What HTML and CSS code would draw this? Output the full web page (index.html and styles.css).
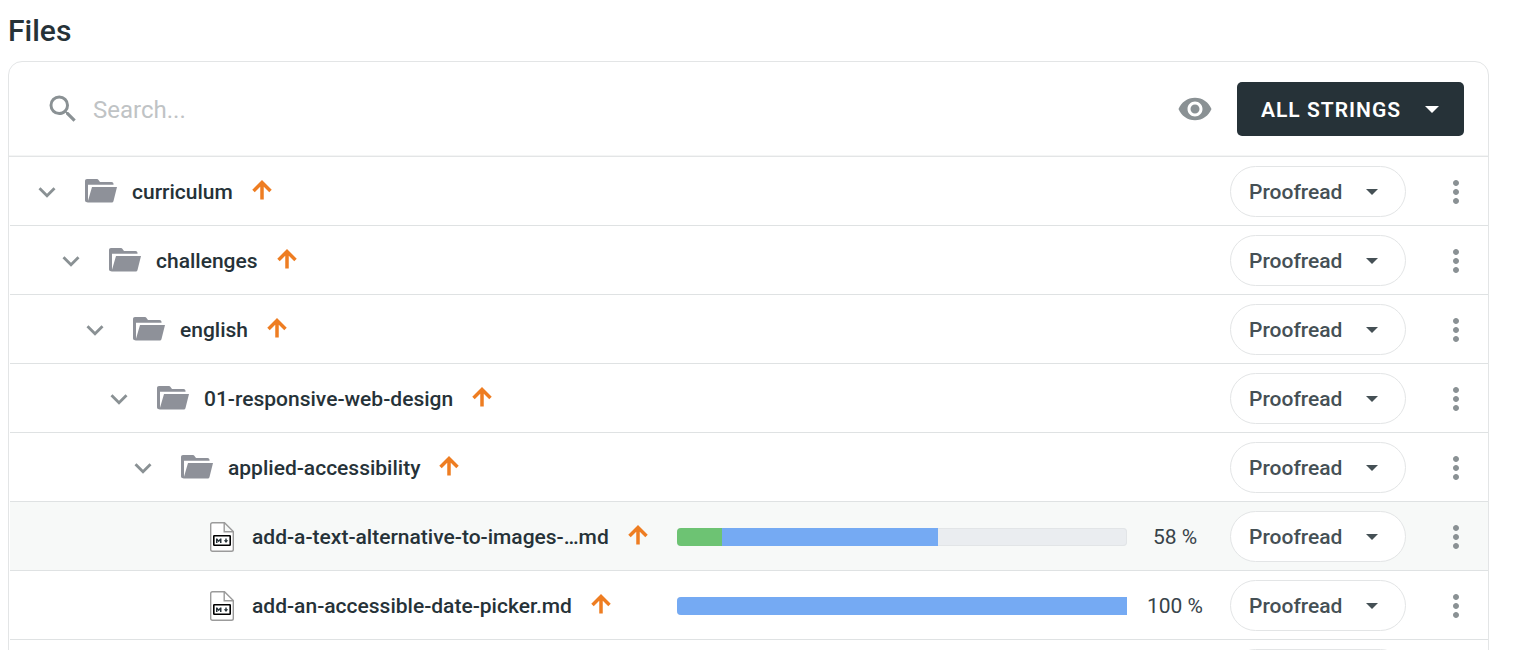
FILE: index.html
```html
<!DOCTYPE html>
<html lang="en">
<head>
  <meta charset="UTF-8" />
  <meta name="viewport" content="width=device-width, initial-scale=1.0" />
  <title>Files</title>
  <link rel="stylesheet" href="styles.css">
</head>
<body>
  <!-- Icons -->
  <svg class="sprite" aria-hidden="true">
    <symbol id="search" viewBox="0 0 24 24">
      <path d="M15.5 14h-.79l-.28-.27A6.47 6.47 0 0 0 16 9.5 6.5 6.5 0 1 0 9.5 16c1.61 0 3.09-.59 4.23-1.57l.27.28v.79l5 4.99L20.49 19l-4.99-5zm-6 0C7.01 14 5 11.99 5 9.5S7.01 5 9.5 5 14 7.01 14 9.5 11.99 14 9.5 14z"/>
    </symbol>
    <symbol id="eye" viewBox="0 0 24 24">
      <path d="M12 4.5C7 4.5 2.73 7.61 1 12c1.73 4.39 6 7.5 11 7.5s9.27-3.11 11-7.5c-1.73-4.39-6-7.5-11-7.5zM12 17c-2.76 0-5-2.24-5-5s2.24-5 5-5 5 2.24 5 5-2.24 5-5 5zm0-8c-1.66 0-3 1.34-3 3s1.34 3 3 3 3-1.34 3-3-1.34-3-3-3z"/>
    </symbol>
    <symbol id="chevron" viewBox="0 0 24 24">
      <path d="M16.59 8.59L12 13.17 7.41 8.59 6 10l6 6 6-6z"/>
    </symbol>
    <symbol id="dots" viewBox="0 0 24 24">
      <path d="M12 8c1.1 0 2-.9 2-2s-.9-2-2-2-2 .9-2 2 .9 2 2 2zm0 2c-1.1 0-2 .9-2 2s.9 2 2 2 2-.9 2-2-.9-2-2-2zm0 6c-1.1 0-2 .9-2 2s.9 2 2 2 2-.9 2-2-.9-2-2-2z"/>
    </symbol>
    <symbol id="caret" viewBox="0 0 12 6">
      <path d="M0 0h12L6 6z"/>
    </symbol>
    <symbol id="folder" viewBox="0 0 32 24">
      <path d="M2 0h9.500c1 0 1.500.4 2 1l1.500 2h11.500c1.200 0 2 .8 2 2v.8H3V23.200H2c-1.200 0-2-.8-2-2V2c0-1.200.8-2 2-2z"/>
      <path d="M7 8H32l-3.500 14c-.3 1.200-1 1.600-2 1.600H2.500z"/>
    </symbol>
    <symbol id="arrow-up" viewBox="0 0 20 20">
      <path d="M1.500 11L10 2.500 18.500 11M10 3v16.500" fill="none" stroke="currentColor" stroke-width="3.500"/>
    </symbol>
    <symbol id="md-file" viewBox="0 0 24 30">
      <path d="M2.500.7H14.500L23.300 9.500V27.500q0 1.800-1.800 1.800H2.500Q.7 29.300.7 27.500V2.500Q.7.7 2.500.7zM14.200.7V9.700H23.300" fill="#fff" stroke="#9b9b9b" stroke-width="1.400"/>
      <rect x="3.800" y="13.800" width="16.400" height="9.400" rx=".5" fill="#fff" stroke="#000" stroke-width="1.600"/>
      <path d="M6 21v-4.500h1.300L8.700 18.200l1.400-1.700h1.400V21H10v-2.300L8.700 20.200 7.500 18.700V21z"/>
      <path d="M15.300 16.500h1.400v1.800h1.500L16 21l-2.200-2.700h1.500z"/>
    </symbol>
  </svg>

  <main class="page">
    <h1>Files</h1>

    <div class="card">
      <!-- Toolbar -->
      <div class="toolbar">
        <label class="search">
          <svg class="icon"><use href="#search"/></svg>
          <input type="search" placeholder="Search..." aria-label="Search">
        </label>
        <button class="icon-btn" type="button" aria-label="Preview"><svg class="icon"><use href="#eye"/></svg></button>
        <div class="dropdown filter">
          <select aria-label="Filter"><option>All strings</option></select>
          <svg class="caret"><use href="#caret"/></svg>
        </div>
      </div>

      <!-- File tree -->
      <ul class="files">
        <li class="row level-1">
          <div class="name">
            <button class="icon-btn toggle" type="button" aria-label="Collapse"><svg class="icon"><use href="#chevron"/></svg></button>
            <svg class="folder"><use href="#folder"/></svg>
            <a href="#">curriculum</a>
            <svg class="priority"><use href="#arrow-up"/></svg>
          </div>
          <div class="dropdown status">
            <select aria-label="Status"><option>Proofread</option></select>
            <svg class="caret"><use href="#caret"/></svg>
          </div>
          <button class="icon-btn menu" type="button" aria-label="More"><svg class="icon"><use href="#dots"/></svg></button>
        </li>
        <li class="row level-2">
          <div class="name">
            <button class="icon-btn toggle" type="button" aria-label="Collapse"><svg class="icon"><use href="#chevron"/></svg></button>
            <svg class="folder"><use href="#folder"/></svg>
            <a href="#">challenges</a>
            <svg class="priority"><use href="#arrow-up"/></svg>
          </div>
          <div class="dropdown status">
            <select aria-label="Status"><option>Proofread</option></select>
            <svg class="caret"><use href="#caret"/></svg>
          </div>
          <button class="icon-btn menu" type="button" aria-label="More"><svg class="icon"><use href="#dots"/></svg></button>
        </li>
        <li class="row level-3">
          <div class="name">
            <button class="icon-btn toggle" type="button" aria-label="Collapse"><svg class="icon"><use href="#chevron"/></svg></button>
            <svg class="folder"><use href="#folder"/></svg>
            <a href="#">english</a>
            <svg class="priority"><use href="#arrow-up"/></svg>
          </div>
          <div class="dropdown status">
            <select aria-label="Status"><option>Proofread</option></select>
            <svg class="caret"><use href="#caret"/></svg>
          </div>
          <button class="icon-btn menu" type="button" aria-label="More"><svg class="icon"><use href="#dots"/></svg></button>
        </li>
        <li class="row level-4">
          <div class="name">
            <button class="icon-btn toggle" type="button" aria-label="Collapse"><svg class="icon"><use href="#chevron"/></svg></button>
            <svg class="folder"><use href="#folder"/></svg>
            <a href="#">01-responsive-web-design</a>
            <svg class="priority"><use href="#arrow-up"/></svg>
          </div>
          <div class="dropdown status">
            <select aria-label="Status"><option>Proofread</option></select>
            <svg class="caret"><use href="#caret"/></svg>
          </div>
          <button class="icon-btn menu" type="button" aria-label="More"><svg class="icon"><use href="#dots"/></svg></button>
        </li>
        <li class="row level-5">
          <div class="name">
            <button class="icon-btn toggle" type="button" aria-label="Collapse"><svg class="icon"><use href="#chevron"/></svg></button>
            <svg class="folder"><use href="#folder"/></svg>
            <a href="#">applied-accessibility</a>
            <svg class="priority"><use href="#arrow-up"/></svg>
          </div>
          <div class="dropdown status">
            <select aria-label="Status"><option>Proofread</option></select>
            <svg class="caret"><use href="#caret"/></svg>
          </div>
          <button class="icon-btn menu" type="button" aria-label="More"><svg class="icon"><use href="#dots"/></svg></button>
        </li>
        <li class="row file active">
          <div class="name">
            <svg class="md-file"><use href="#md-file"/></svg>
            <a href="#">add-a-text-alternative-to-images-…md</a>
            <svg class="priority"><use href="#arrow-up"/></svg>
          </div>
          <div class="progress">
            <div class="approved" style="width: 10%"></div>
            <div class="translated" style="width: 48%"></div>
          </div>
          <div class="percent">58 %</div>
          <div class="dropdown status">
            <select aria-label="Status"><option>Proofread</option></select>
            <svg class="caret"><use href="#caret"/></svg>
          </div>
          <button class="icon-btn menu" type="button" aria-label="More"><svg class="icon"><use href="#dots"/></svg></button>
        </li>
        <li class="row file">
          <div class="name">
            <svg class="md-file"><use href="#md-file"/></svg>
            <a href="#">add-an-accessible-date-picker.md</a>
            <svg class="priority"><use href="#arrow-up"/></svg>
          </div>
          <div class="progress complete">
            <div class="translated" style="width: 100%"></div>
          </div>
          <div class="percent">100 %</div>
          <div class="dropdown status">
            <select aria-label="Status"><option>Proofread</option></select>
            <svg class="caret"><use href="#caret"/></svg>
          </div>
          <button class="icon-btn menu" type="button" aria-label="More"><svg class="icon"><use href="#dots"/></svg></button>
        </li>
        <li class="row file">
          <div class="dropdown status">
            <select aria-label="Status"><option>Proofread</option></select>
            <svg class="caret"><use href="#caret"/></svg>
          </div>
          <button class="icon-btn menu" type="button" aria-label="More"><svg class="icon"><use href="#dots"/></svg></button>
        </li>
      </ul>
    </div>
  </main>
</body>
</html>
```

FILE: styles.css
```css
* {
  margin: 0;
  padding: 0;
  box-sizing: border-box;
}

body {
  font-family: Roboto, "Liberation Sans", sans-serif;
  font-size: 21px;
  background: #fff;
  color: #263238;
}

.sprite {
  display: none;
}

.page {
  height: 100vh;
  padding: 13px 25px 0 8px;
  overflow: hidden;
}

h1 {
  margin-bottom: 12px;
  font-size: 30px;
  font-weight: 500;
  line-height: 36px;
}

.card {
  border: 1px solid #e3e5e6;
  border-radius: 14px;
}

svg {
  display: block;
  flex: none;
  fill: currentColor;
}

.icon {
  width: 36px;
  height: 36px;
}

.icon-btn {
  border: none;
  background: none;
  color: #8a9194;
  cursor: pointer;
}

/* Toolbar */
.toolbar {
  display: flex;
  align-items: center;
  height: 95px;
  padding: 0 24px 0 36px;
  border-bottom: 1px solid #e3e5e6;
  box-shadow: inset 0 -1px #f4f5f5;
}

.search {
  display: flex;
  flex: 1;
  align-items: center;
  gap: 12px;
  color: #8a9194;
}

.search input {
  flex: 1;
  padding-top: 2px;
  border: none;
  outline: none;
  background: none;
  font: 24px/32px Roboto, "Liberation Sans", sans-serif;
  color: #263238;
}

.search input::placeholder {
  color: #bfc3c5;
}

/* Dropdowns, the caret sits in the same cell as the select */
.dropdown {
  display: grid;
  align-items: center;
}

.dropdown select,
.dropdown .caret {
  grid-area: 1 / 1;
}

.dropdown select {
  appearance: none;
  width: 100%;
  font-family: inherit;
  font-size: 21px;
  font-weight: 500;
  cursor: pointer;
}

.dropdown .caret {
  justify-self: end;
  pointer-events: none;
}

.filter {
  width: 227px;
  margin-left: 24px;
  color: #fff;
}

.filter select {
  height: 54px;
  padding: 2px 24px 0;
  border: none;
  border-radius: 5px;
  background: #263238;
  color: #fff;
  font-weight: 600;
  letter-spacing: 1px;
  text-transform: uppercase;
}

.filter .caret {
  width: 14px;
  height: 7px;
  margin-right: 25px;
}

.status {
  grid-column: 4;
  color: #455055;
}

.status select {
  height: 51px;
  padding: 0 18px;
  border: 1px solid #e3e5e6;
  border-radius: 26px;
  background: #fff;
  color: #455055;
}

.status .caret {
  width: 12px;
  height: 6px;
  margin-right: 28px;
}

/* File tree */
.files {
  padding-left: 1px;
  list-style: none;
}

.row {
  display: grid;
  grid-template-columns: minmax(0, 1fr) 450px 103px 176px 82px;
  align-items: center;
  height: 69px;
  padding-top: 1px;
  border-bottom: 1px solid #dfe2e3;
}

.row.active {
  background: #f7f9f8;
}

.name {
  display: flex;
  align-items: center;
  padding-left: 20px;
}

.level-2 .name {
  padding-left: 44px;
}

.level-3 .name {
  padding-left: 68px;
}

.level-4 .name {
  padding-left: 92px;
}

.level-5 .name {
  padding-left: 116px;
}

.file .name {
  padding-left: 200px;
}

.name a {
  color: inherit;
  font-weight: 500;
  text-decoration: none;
}

.toggle .icon {
  width: 34px;
  height: 34px;
}

.folder {
  width: 32px;
  height: 24px;
  margin: 0 15px 2px 21px;
  color: #8e9199;
}

.md-file {
  width: 24px;
  height: 30px;
  margin-right: 18px;
}

.priority {
  width: 20px;
  height: 20px;
  margin: 0 0 4px 19px;
  color: #ee7d22;
}

.progress {
  display: flex;
  height: 18px;
  border-radius: 4px;
  background: #eaedf0;
  box-shadow: inset 0 0 0 1px #e2e5e7;
  overflow: hidden;
}

.progress.complete {
  border-radius: 4px 0 0 4px;
}

.approved {
  background: #6dc373;
}

.translated {
  background: #75aaf3;
}

.percent {
  padding-right: 7px;
  color: #37434a;
  text-align: center;
}

.menu {
  justify-self: center;
  padding-left: 18px;
}
```
